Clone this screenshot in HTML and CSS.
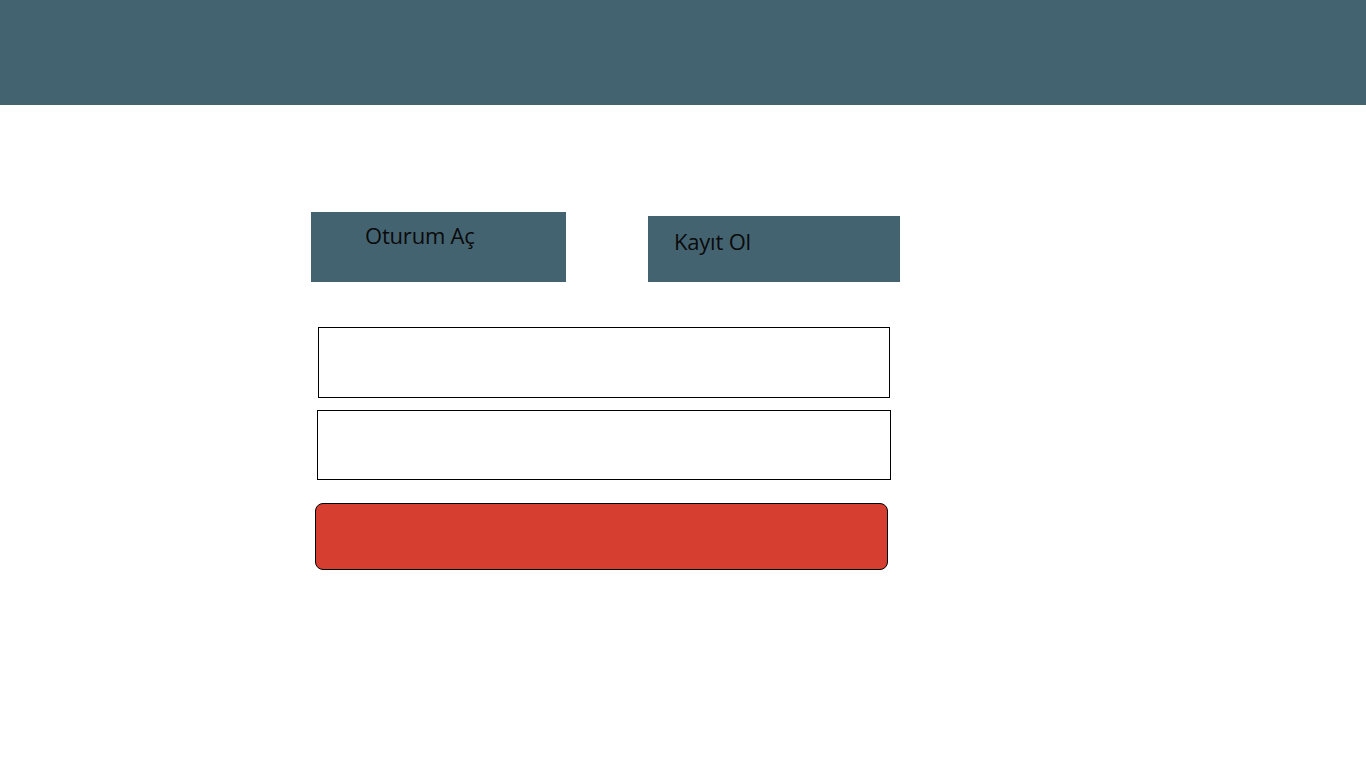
FILE: index.html
```html
<!DOCTYPE html>
<html lang="tr">
<head>
<meta charset="utf-8">
<title>Oturum Aç</title>
<link rel="stylesheet" href="styles.css">
</head>
<body>
<header class="topbar"></header>
<main class="page">
  <div class="tabs">
    <div class="tab tab-login">Oturum Aç</div>
    <div class="tab tab-register">Kayıt Ol</div>
  </div>
  <form class="form">
    <input class="field field-user" type="text" aria-label="Kullanıcı adı">
    <input class="field field-pass" type="password" aria-label="Şifre">
    <button class="submit" type="button" aria-label="Giriş"></button>
  </form>
</main>
</body>
</html>
```
FILE: styles.css
```css
* { box-sizing: border-box; }
html, body { margin: 0; padding: 0; background: #fff; }
body { font-family: "Open Sans", "Liberation Sans", sans-serif; color: #111; }

.topbar { height: 105px; background: #446371; }

.page { padding-left: 311px; }

.tabs {
  display: flex;
  align-items: flex-end;
  gap: 82px;
  margin-top: 107px;
  height: 70px;
}
.tab {
  background: #446371;
  color: #0a0a0a;
  font-size: 22px;
  letter-spacing: -0.2px;
  line-height: 28px;
}
.tab-login { width: 255px; height: 70px; padding: 9px 0 0 54px; }
.tab-register { width: 252px; height: 66px; padding: 11px 0 0 26px; }

.form { display: flex; flex-direction: column; align-items: flex-start; }
.field {
  display: block;
  border: 1px solid #000;
  background: #fff;
  padding: 0;
  outline: none;
}
.field-user { margin: 45px 0 0 7px; width: 572px; height: 71px; }
.field-pass { margin: 12px 0 0 6px; width: 574px; height: 70px; }
.submit {
  margin: 23px 0 0 4px;
  width: 573px;
  height: 67px;
  background: #d63f30;
  border: 1px solid #000;
  border-radius: 8px;
  padding: 0;
}
```
